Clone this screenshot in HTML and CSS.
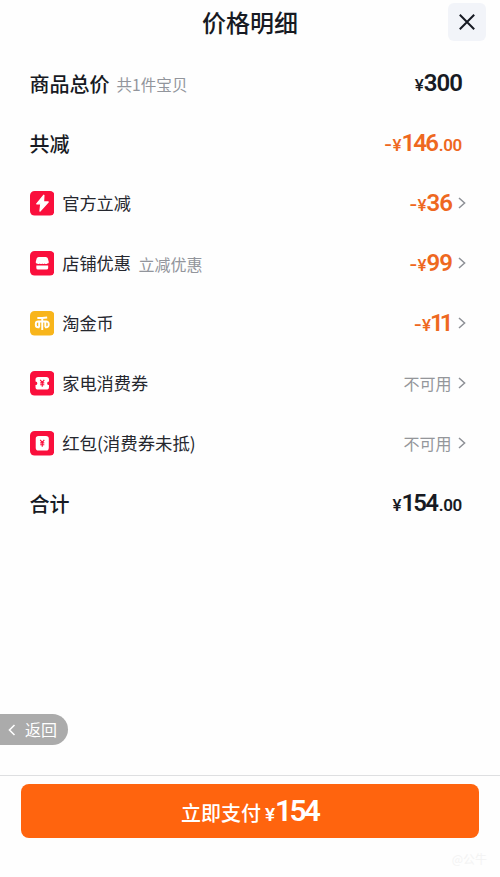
FILE: index.html
```html
<!DOCTYPE html>
<html lang="zh-CN">
<head>
<meta charset="UTF-8">
<title>价格明细</title>
<link rel="stylesheet" href="styles.css">
</head>
<body>
<div class="page">
  <header class="header">
    <h1>价格明细</h1>
    <button class="close" aria-label="关闭"><svg width="18" height="18" viewBox="0 0 18 18"><path d="M1.8 1.8 16.2 16.2M16.2 1.8 1.8 16.2"/></svg></button>
  </header>
  <main class="list">
    <div class="row total"><span class="label">商品总价</span><span class="note count">共1件宝贝</span><span class="price"><i>¥</i><b>300</b></span></div>
    <div class="row total"><span class="label">共减</span><span class="price off"><em>-</em><i>¥</i><b class="tight">146</b><small>.00</small></span></div>
    <div class="row item">
      <svg class="icon" viewBox="0 0 24 24"><rect class="red" width="24" height="24" rx="4.5"/><path class="white" d="M13.6 4.200 6.600 12.600H10.600L9.800 19.600 17.800 10.800H13.200z" stroke="#fff" stroke-width="1.300" stroke-linejoin="round"/></svg>
      <span class="label">官方立减</span><span class="price off"><em>-</em><i>¥</i><b>36</b></span><svg class="arrow" viewBox="0 0 8 12"><path d="M1 1 6.6 6 1 11"/></svg>
    </div>
    <div class="row item">
      <svg class="icon" viewBox="0 0 24 24"><rect class="red" width="24" height="24" rx="4.5"/><path class="white" d="M8.500 5.800h7q1.600 0 2 1.500l.9 3.400q.2 1.600-1.400 1.600-1.400 1-2.700 0-1.200 1-2.300 0-1.200 1-2.400 0-1.300 1-2.600 0-1.600 0-1.400-1.600l.9-3.400q.4-1.500 2-1.500zM6.200 14.300h11.600v2.300q0 1.600-1.600 1.600H7.800q-1.600 0-1.600-1.600z"/></svg>
      <span class="label">店铺优惠</span><span class="note">立减优惠</span><span class="price off"><em>-</em><i>¥</i><b>99</b></span><svg class="arrow" viewBox="0 0 8 12"><path d="M1 1 6.6 6 1 11"/></svg>
    </div>
    <div class="row item">
      <svg class="icon" viewBox="0 0 24 24"><rect class="gold" width="24" height="24" rx="4.500"/><path class="coin" d="M7.200 6.900Q12 6.800 16.800 6.300M12 6.800V18.600M9.300 16H8A2.300 2.300 0 0 1 5.700 13.700V12.500A2.300 2.300 0 0 1 8 10.200H16A2.300 2.300 0 0 1 18.300 12.500V13.700A2.300 2.300 0 0 1 16 16H14.700M9 10.500V16M15 10.500V16"/></svg>
      <span class="label">淘金币</span><span class="price off"><em>-</em><i>¥</i><b class="ones">11</b></span><svg class="arrow" viewBox="0 0 8 12"><path d="M1 1 6.6 6 1 11"/></svg>
    </div>
    <div class="row item">
      <svg class="icon" viewBox="0 0 24 24"><rect class="red" width="24" height="24" rx="4.5"/><path class="white" d="M8 5.800h8q2.600 0 2.600 2.600v1.800a1.800 1.800 0 0 0 0 3.600v1.800q0 2.600-2.600 2.600H8q-2.600 0-2.600-2.600v-1.800a1.800 1.800 0 0 0 0-3.600V8.400q0-2.600 2.600-2.600z"/><path class="yen" d="M10 8.800 12 11.200 14 8.800M12 11.200V15.500M10 11.600H14M10 13.500H14"/></svg>
      <span class="label">家电消费券</span><span class="status">不可用</span><svg class="arrow" viewBox="0 0 8 12"><path d="M1 1 6.6 6 1 11"/></svg>
    </div>
    <div class="row item">
      <svg class="icon" viewBox="0 0 24 24"><rect class="red" width="24" height="24" rx="4.5"/><rect class="white" x="5.600" y="4.900" width="12.800" height="14.200" rx="2.800"/><path class="yen" d="M10 8.800 12 11.200 14 8.800M12 11.200V15.500M10 11.600H14M10 13.500H14"/></svg>
      <span class="label wide">红包(消费券未抵)</span><span class="status">不可用</span><svg class="arrow" viewBox="0 0 8 12"><path d="M1 1 6.6 6 1 11"/></svg>
    </div>
    <div class="row total"><span class="label">合计</span><span class="price"><i>¥</i><b class="tight">154</b><small>.00</small></span></div>
  </main>
  <button class="back"><svg width="8" height="12" viewBox="0 0 8 12"><path d="M6.500 1 1.500 6 6.500 11"/></svg><span>返回</span></button>
  <footer class="footer">
    <button class="pay"><span>立即支付</span><i>¥</i><b>154</b></button>
    <span class="mark">@公牛</span>
  </footer>
</div>
</body>
</html>
```
FILE: styles.css
```css
* { box-sizing: border-box; }
body {
  margin: 0;
  background: #fefefe;
  color: #171a23;
  font-family: "Noto Sans CJK SC", sans-serif;
}
button { border: 0; padding: 0; font: inherit; }
.page { height: 877px; display: flex; flex-direction: column; overflow: hidden; }
.header {
  height: 53px;
  flex: none;
  display: grid;
  grid-template-columns: 1fr auto 1fr;
  padding: 3px 14px 0 14px;
}
h1 { grid-column: 2; margin: 0; font-size: 24px; line-height: 37px; font-weight: 500; }
.close {
  justify-self: end;
  width: 38px;
  height: 38px;
  border-radius: 6px;
  background: #f2f4f9;
  display: grid;
  place-items: center;
}
.close path { fill: none; stroke: #171a23; stroke-width: 2; }
.list { padding: 0 34px 0 29.5px; flex: none; }
.row { height: 60px; display: flex; align-items: center; }
.total { padding-right: 4px; }
.total .label { font-size: 20px; font-weight: 500; }
.item { padding-top: 1px; }
.item .label { font-size: 17.2px; color: #25272e; margin-top: -2px; }
.item .wide { font-size: 17.4px; }
.icon { width: 24.5px; height: 24.5px; margin-right: 8.2px; flex: none; }
.red { fill: #fa0f3c; }
.gold { fill: #f8b51b; }
.white { fill: #fff; }
.coin { fill: none; stroke: #fff; stroke-width: 1.9; }
.yen { fill: none; stroke: #fa0f3c; stroke-width: 1.1; }
.note { font-size: 16px; color: #92959c; margin: 1px 0 0 7.500px; }
.count { font-size: 15.6px; margin-left: 7px; }
.price {
  margin-left: auto;
  display: flex;
  align-items: baseline;
  font-family: Roboto, "Noto Sans CJK SC", sans-serif;
  font-weight: 600;
  line-height: 28px;
}
.total .price { padding-top: 2px; }
.price i, .pay i { font-style: normal; font-size: 17px; font-weight: 500; }
.price b { font-size: 24px; font-weight: 600; letter-spacing: -1px; }
.price .tight { letter-spacing: -1.8px; margin-right: 1.5px; }
.price .ones { letter-spacing: -4px; margin: 0 2.500px 0 -1px; }
.price small { font-size: 17px; letter-spacing: -0.3px; }
.price em {
  font-style: normal;
  font-size: 24px;
  font-weight: 400;
  line-height: 28px;
  margin-right: 1px;
  transform: translateY(1px);
}
.off { color: #ee681f; }
.item .price { margin-right: 6px; padding-top: 1px; }
.arrow { width: 8px; height: 12px; flex: none; margin-top: -1px; }
.arrow path { fill: none; stroke: #8d9096; stroke-width: 1.5; }
.status { margin: -1px 6.5px 0 auto; font-size: 16px; color: #94969a; }
.back {
  width: 68px;
  height: 31px;
  margin-top: 181px;
  flex: none;
  border-radius: 0 16px 16px 0;
  background: #ababab;
  color: #fff;
  display: flex;
  align-items: center;
  gap: 9px;
  padding-left: 8px;
  font-size: 16px;
}
.back span { margin: -1px 0 0 0; }
.back path { fill: none; stroke: #fff; stroke-width: 1.6; }
.footer {
  margin-top: auto;
  height: 102px;
  flex: none;
  border-top: 1px solid #dedfe1;
  padding: 8px 21px 0;
  display: flex;
  flex-direction: column;
}
.pay {
  height: 54px;
  border-radius: 8px;
  background: #ff640e;
  color: #fff;
  display: flex;
  justify-content: center;
  align-items: baseline;
  line-height: 53px;
  font-size: 20px;
  font-weight: 500;
}
.pay i, .pay b { font-family: Roboto, sans-serif; font-weight: 600; }
.pay i { margin-left: 4px; font-size: 19px; }
.pay b { font-size: 30px; letter-spacing: -2.8px; margin-right: 1px; }
.mark { align-self: flex-end; margin: 12px -8px 0 0; font-size: 12px; line-height: 18px; color: #f3f3f3; }
```
